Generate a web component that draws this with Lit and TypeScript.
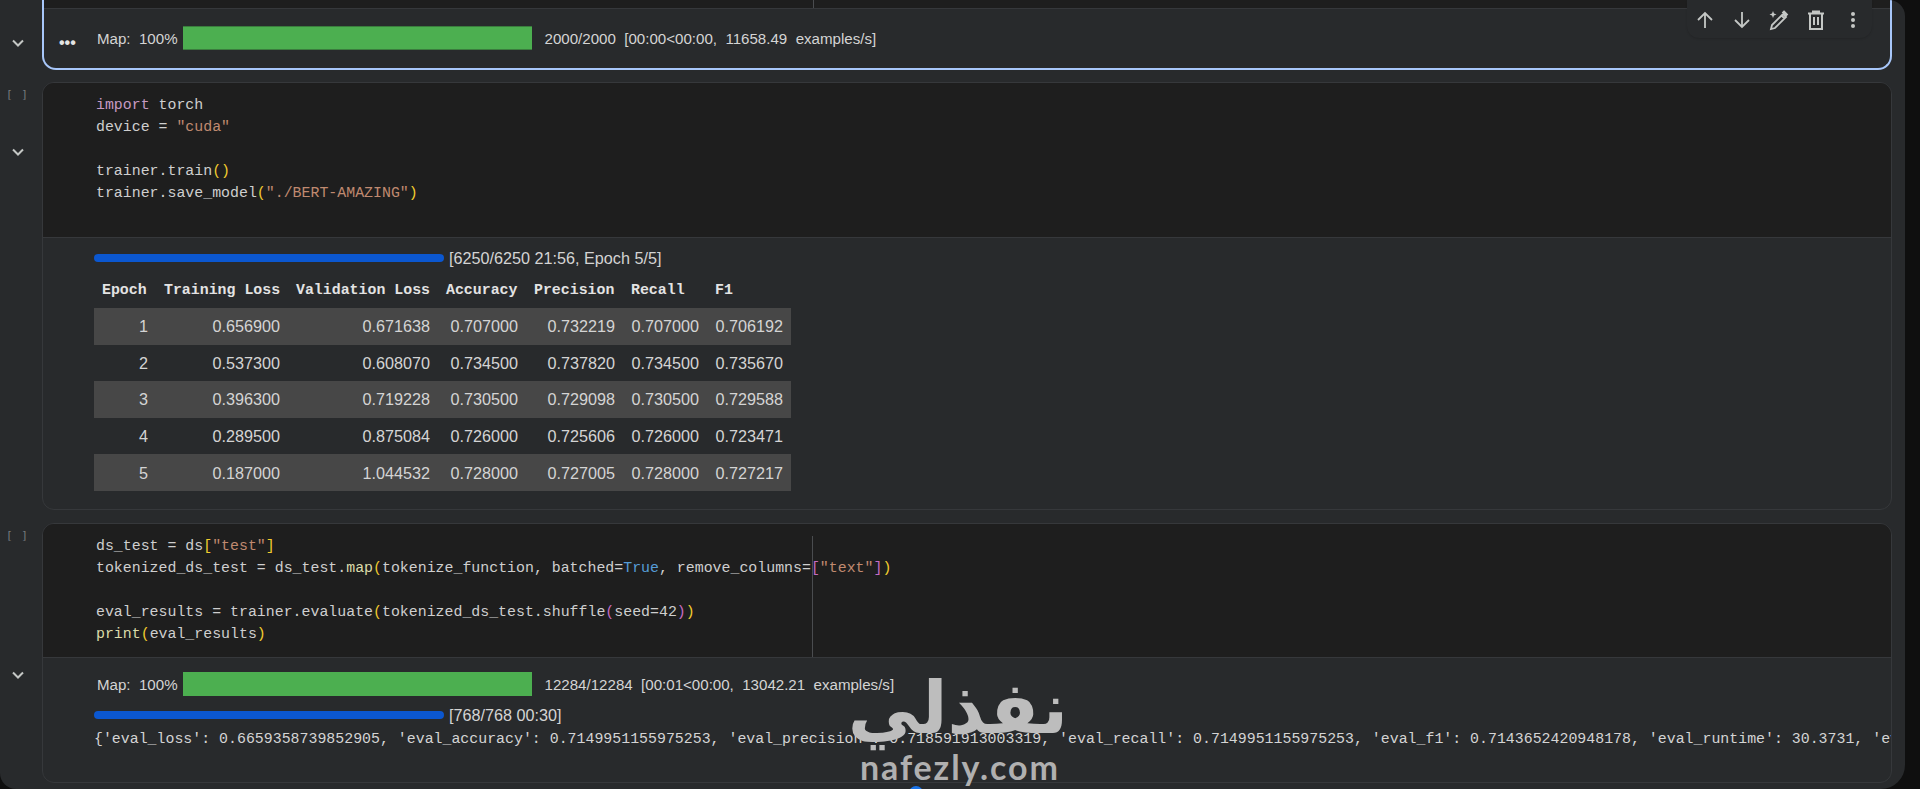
import { LitElement, html, css } from "lit";
import { customElement } from "lit/decorators.js";

const chevron = html`<svg class="chev" width="16" height="16" viewBox="0 0 16 16"><path d="M3 5.500 L8 10.500 L13 5.500" fill="none" stroke="#c4c7c5" stroke-width="2"/></svg>`;
const rows = [
  ["1","0.656900","0.671638","0.707000","0.732219","0.707000","0.706192"],
  ["2","0.537300","0.608070","0.734500","0.737820","0.734500","0.735670"],
  ["3","0.396300","0.719228","0.730500","0.729098","0.730500","0.729588"],
  ["4","0.289500","0.875084","0.726000","0.725606","0.726000","0.723471"],
  ["5","0.187000","1.044532","0.728000","0.727005","0.728000","0.727217"],
];
const heads = ["Epoch","Training Loss","Validation Loss","Accuracy","Precision","Recall","F1"];

@customElement("app-root")
export class AppRoot extends LitElement {
  static styles = css`
    :host { display:block; width:1920px; height:789px; background:#0f0f0f; overflow:hidden; position:relative; font-family:"Liberation Sans",sans-serif; }
    .window { width:1905px; height:789px; background:#282a2c; border-radius:0 16px 24px 16px; overflow:hidden; display:flex; flex-direction:column; }
    .row { display:grid; grid-template-columns:42px 1850px; flex:none; }
    .gutter { display:flex; flex-direction:column; align-items:center; color:#6f7276; }
    .chev { display:block; margin-left:-7px; }
    .brk { font:11px/14px "DejaVu Sans Mono",monospace; letter-spacing:1px; margin-left:-7px; color:#777a7e; }
    .cell { border:1px solid #36383b; border-radius:12px; overflow:hidden; box-sizing:border-box; background:#282a2c; }
    .c1 { height:70px; border:2px solid #a8c7fa; border-top:none; border-radius:0 0 14px 14px; margin-bottom:12px; position:relative; overflow:visible; }
    .c2 { height:428px; margin-bottom:13px; }
    .c3 { height:260px; }
    .code { background:#1e1e1e; font:14.9px/22px "Liberation Mono",monospace; color:#cfcfcf; padding:11px 0 0 53px; box-sizing:border-box; white-space:pre; position:relative; border-bottom:1px solid #36383b; }
    .c1 .code { height:9px; padding:0; }
    .c2 .code { height:155px; }
    .c3 .code { height:134px; }
    .ruler { position:absolute; left:769px; top:0; bottom:0; width:1px; background:#4a4c4f; }
    .c3 .ruler { top:12px; }
    .k { color:#c79ac2; } .s { color:#c08a70; } .y { color:#f2cc2e; } .p { color:#c56bc2; } .b { color:#569cd6; } .f { color:#dcdcaa; }
    .out { color:#d4d4d4; font-size:15.1px; padding-left:52px; }
    .c1 .out { position:relative; padding-top:17px; padding-left:51px; }
    .dots { position:absolute; left:15px; top:29px; font:bold 16px/10px "Liberation Sans",sans-serif; color:#e3e3e3; letter-spacing:0; }
    .map { display:flex; align-items:center; height:24px; padding-left:2px; white-space:pre; }
    .green { width:349px; height:24px; background:#4caf50; margin:0 13px 0 5px; flex:none; }
    .c1 .green { box-shadow:inset 0 1px 0 #3b7d3e, inset 0 -1px 0 #3b7d3e; }
    .prog { display:flex; align-items:center; height:16px; gap:5px; white-space:pre; font-size:16.2px; margin-left:-1px; }
    .bar { width:350px; height:8px; border-radius:4px; background:#0b57d0; flex:none; }
    .c2 .out { padding-top:12px; }
    table { border-collapse:collapse; table-layout:fixed; width:697px; margin:8px 0 0 -1px; }
    th { font:bold 14.9px/22px "Liberation Mono",monospace; color:#e3e3e3; text-align:left; padding:5px 8px 7px; height:22px; white-space:nowrap; }
    td { font-size:16.2px; line-height:20px; text-align:right; padding:8px 8px 8px; height:20px; white-space:nowrap; color:#d4d4d4; }
    tbody tr:nth-child(odd) { background:#474747; }
    tbody tr { height:36.6px; }
    .c3 .out { padding-top:14px; }
    .c3 .prog { margin-top:11px; }
    .eval { font:14.9px/22px "Liberation Mono",monospace; white-space:pre; margin:5px 0 0 -1px; width:1798px; overflow:hidden; }
    .tools { position:absolute; left:1687px; top:0; width:185px; height:38px; background:#282a2c; border-radius:0 0 12px 12px; box-shadow:0 1px 2px #0002; display:flex; align-items:center; justify-content:space-between; padding:2px 7px 0 6px; box-sizing:border-box; }
    .tools svg { display:block; }
    .wm { position:absolute; left:852px; top:658px; width:216px; text-align:center; font:bold 72px/100px "DejaVu Sans",sans-serif; color:#bdbdbd; direction:rtl; }
    .wm2 { position:absolute; left:860px; top:747px; font:700 34px/40px "Lato",sans-serif; letter-spacing:1.9px; color:#b0b0b0; }
    .dot { position:absolute; left:909px; top:786px; width:14px; height:14px; border-radius:50%; background:#1a73e8; }
  `;
  render() {
    return html`<div class="window">
      <div class="row">
        <div class="gutter" style="padding-top:35px">${chevron}</div>
        <div class="cell c1">
          <div class="code"><div class="ruler"></div></div>
          <div class="out"><span class="dots">•••</span>
            <div class="map"><span>Map:  100%</span><div class="green"></div><span>2000/2000  [00:00&lt;00:00,  11658.49  examples/s]</span></div>
          </div>
        </div>
      </div>
      <div class="row">
        <div class="gutter" style="padding-top:6px"><span class="brk">[ ]</span><div style="height:42px"></div>${chevron}</div>
        <div class="cell c2">
          <div class="code"><span class="k">import</span> torch
device = <span class="s">"cuda"</span>

trainer.train<span class="y">()</span>
trainer.save_model<span class="y">(</span><span class="s">"./BERT-AMAZING"</span><span class="y">)</span></div>
          <div class="out">
            <div class="prog"><div class="bar"></div><span>[6250/6250 21:56, Epoch 5/5]</span></div>
            <table>
              <colgroup><col style="width:62px"><col style="width:132px"><col style="width:150px"><col style="width:88px"><col style="width:97px"><col style="width:84px"><col style="width:84px"></colgroup>
              <thead><tr>${heads.map((h) => html`<th>${h}</th>`)}</tr></thead>
              <tbody>${rows.map((r) => html`<tr>${r.map((c) => html`<td>${c}</td>`)}</tr>`)}</tbody>
            </table>
          </div>
        </div>
      </div>
      <div class="row">
        <div class="gutter" style="padding-top:6px"><span class="brk">[ ]</span><div style="height:124px"></div>${chevron}</div>
        <div class="cell c3">
          <div class="code"><div class="ruler"></div>ds_test = ds<span class="y">[</span><span class="s">"test"</span><span class="y">]</span>
tokenized_ds_test = ds_test.<span class="f">map</span><span class="y">(</span>tokenize_function, batched=<span class="b">True</span>, remove_columns=<span class="p">[</span><span class="s">"text"</span><span class="p">]</span><span class="y">)</span>

eval_results = trainer.evaluate<span class="y">(</span>tokenized_ds_test.shuffle<span class="p">(</span>seed=42<span class="p">)</span><span class="y">)</span>
<span class="f">print</span><span class="y">(</span>eval_results<span class="y">)</span></div>
          <div class="out">
            <div class="map"><span>Map:  100%</span><div class="green"></div><span>12284/12284  [00:01&lt;00:00,  13042.21  examples/s]</span></div>
            <div class="prog"><div class="bar"></div><span>[768/768 00:30]</span></div>
            <div class="eval">{'eval_loss': 0.6659358739852905, 'eval_accuracy': 0.7149951155975253, 'eval_precision': 0.718591913003319, 'eval_recall': 0.7149951155975253, 'eval_f1': 0.7143652420948178, 'eval_runtime': 30.3731, 'eval_samples_per_second': 404.437}</div>
          </div>
        </div>
      </div>
    </div>
    <div class="tools">
      <svg width="24" height="24" viewBox="0 0 24 24"><path d="M12 20V5M5 12l7-7 7 7" fill="none" stroke="#c4c7c5" stroke-width="1.8"/></svg>
      <svg width="24" height="24" viewBox="0 0 24 24"><path d="M12 4v15M5 12l7 7 7-7" fill="none" stroke="#c4c7c5" stroke-width="1.8"/></svg>
      <svg width="24" height="24" viewBox="0 0 24 24"><path d="M4 21l1-4L16 6l3 3L8 20zM14.500 7.500l3 3M17 3.500l3 3-1 1-3-3z" fill="none" stroke="#c4c7c5" stroke-width="1.8"/><path d="M6 3l1 2.500L9.500 6.500 7 7.500 6 10 5 7.500 2.500 6.500 5 5.500z" fill="#c4c7c5"/></svg>
      <svg width="24" height="24" viewBox="0 0 24 24"><path d="M4 5.500h16M9 5.500V3.500h6v2M6 5.500V21h12V5.500M10 9v8M14 9v8" fill="none" stroke="#c4c7c5" stroke-width="2"/></svg>
      <svg width="24" height="24" viewBox="0 0 24 24"><circle cx="12" cy="6" r="2" fill="#c4c7c5"/><circle cx="12" cy="12" r="2" fill="#c4c7c5"/><circle cx="12" cy="18" r="2" fill="#c4c7c5"/></svg>
    </div>
    <div class="wm">نفذلي</div>
    <div class="wm2">nafezly.com</div>
    <div class="dot"></div>`;
  }
}
